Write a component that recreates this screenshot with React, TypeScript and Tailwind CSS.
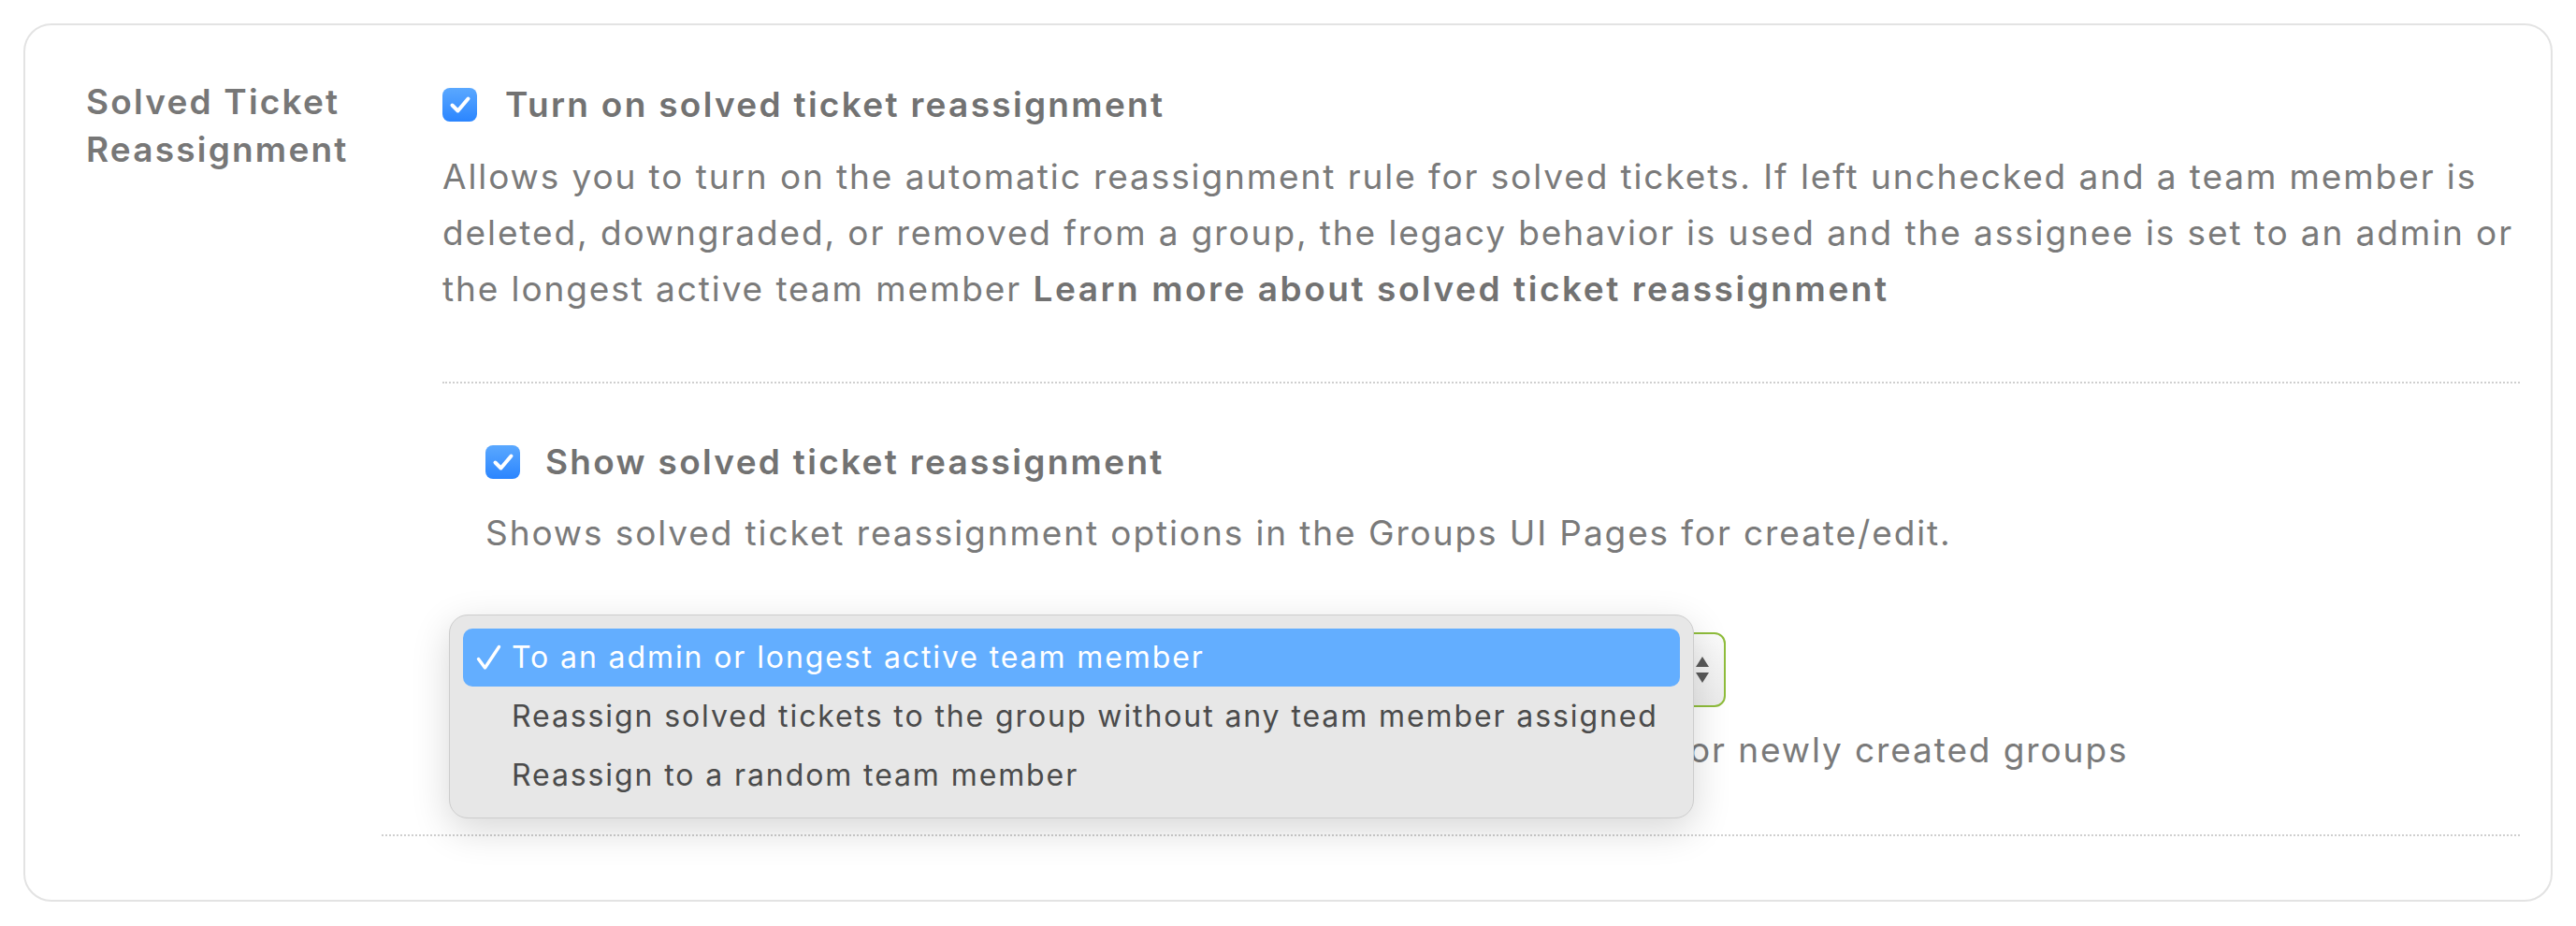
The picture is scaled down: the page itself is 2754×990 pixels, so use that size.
import React from "react";

function Checkbox() {
  return (
    <div className="w-[37px] h-[36px] shrink-0 rounded-[8px] bg-gradient-to-b from-[#5aa8ff] to-[#2a85ff] flex items-center justify-center">
      <svg width="24" height="22" viewBox="0 0 24 22" fill="none">
        <path d="M3.5 11.5 L9.5 17.5 L20.5 4.5" stroke="white" strokeWidth="4" strokeLinecap="round" strokeLinejoin="round" />
      </svg>
    </div>
  );
}

export default function App() {
  return (
    <div className="bg-white w-[2754px] h-[990px] p-[25px] font-['Inter','Noto_Sans',sans-serif]">
      <div className="border-2 border-[#e3e3e3] rounded-[30px] h-[939px] pl-[65px] pr-[33px] pt-[56px] flex">
        <div className="w-[381px] shrink-0 text-[37px] leading-[51px] font-semibold tracking-[2.2px] text-[#777777]">
          Solved Ticket
          <br />
          Reassignment
        </div>
        <div className="flex-1 flex flex-col pt-[3px]">
          <div className="flex items-center h-[51px] gap-[30px]">
            <Checkbox />
            <span className="text-[37px] leading-[51px] font-semibold tracking-[2.3px] text-[#727272]">
              Turn on solved ticket reassignment
            </span>
          </div>
          <p className="mt-[22px] text-[37px] leading-[60px] tracking-[1.9px] text-[#7a7a7a] whitespace-nowrap">
            Allows you to turn on the automatic reassignment rule for solved tickets. If left unchecked and a team member is
            <br />
            deleted, downgraded, or removed from a group, the legacy behavior is used and the assignee is set to an admin or
            <br />
            the longest active team member{" "}
            <span className="font-semibold tracking-[2.55px] text-[#727272]">Learn more about solved ticket reassignment</span>
          </p>
          <div className="mt-[69px] border-t-2 border-dotted border-[#cfcfcf]" />
          <div className="pl-[46px] flex flex-col">
            <div className="mt-[58px] flex items-center h-[51px] gap-[27px]">
              <Checkbox />
              <span className="text-[37px] leading-[51px] font-semibold tracking-[2.3px] text-[#727272]">
                Show solved ticket reassignment
              </span>
            </div>
            <p className="mt-[21px] text-[37px] leading-[60px] tracking-[1.9px] text-[#7a7a7a] whitespace-nowrap">
              Shows solved ticket reassignment options in the Groups UI Pages for create/edit.
            </p>
            <div className="relative mt-[76px] w-[1326px] h-[80px] z-10">
              <div className="w-full h-full rounded-[12px] border-2 border-[#8fbd3c] bg-gradient-to-b from-[#fbfbfb] to-[#ececec] flex items-center justify-between pl-[24px] pr-[14px]">
                <span className="text-[32px] tracking-[1.9px] text-[#4a4a4a]">To an admin or longest active team member</span>
                <svg width="18" height="32" viewBox="0 0 18 32">
                  <path d="M9 2 L16 13 H2 Z" fill="#5a5a5a" />
                  <path d="M9 30 L16 19 H2 Z" fill="#5a5a5a" />
                </svg>
              </div>
              <div className="absolute left-[-39px] top-[-19px] w-[1331px] h-[218px] rounded-[20px] border border-[#cdcdcd] bg-[#e7e7e7] shadow-[0_12px_40px_rgba(0,0,0,0.16)] px-[14px] pt-[14px] text-[32px] leading-[62px] tracking-[1.9px]">
                <div className="h-[62px] rounded-[10px] bg-[#63aeff] text-white flex items-center">
                  <span className="w-[52px] pl-[14px] flex items-center">
                    <svg width="27" height="28" viewBox="0 0 27 28" fill="none">
                      <path d="M2.5 15.5 L9.5 25 L24.5 2.5" stroke="white" strokeWidth="3.4" strokeLinecap="round" strokeLinejoin="round" />
                    </svg>
                  </span>
                  <span>To an admin or longest active team member</span>
                </div>
                <div className="h-[63px] flex items-center pl-[52px] text-[#4b4b4b]">
                  Reassign solved tickets to the group without any team member assigned
                </div>
                <div className="h-[63px] flex items-center pl-[52px] text-[#4b4b4b]">
                  Reassign to a random team member
                </div>
              </div>
            </div>
            <p className="mt-[16px] ml-[9px] text-[37px] leading-[60px] tracking-[1.9px] text-[#7a7a7a] whitespace-nowrap">
              Sets the default solved ticket reassignment behavior that is used for newly created groups
            </p>
          </div>
          <div className="mt-[60px] ml-[-65px] border-t-2 border-dotted border-[#cfcfcf]" />
        </div>
      </div>
    </div>
  );
}
